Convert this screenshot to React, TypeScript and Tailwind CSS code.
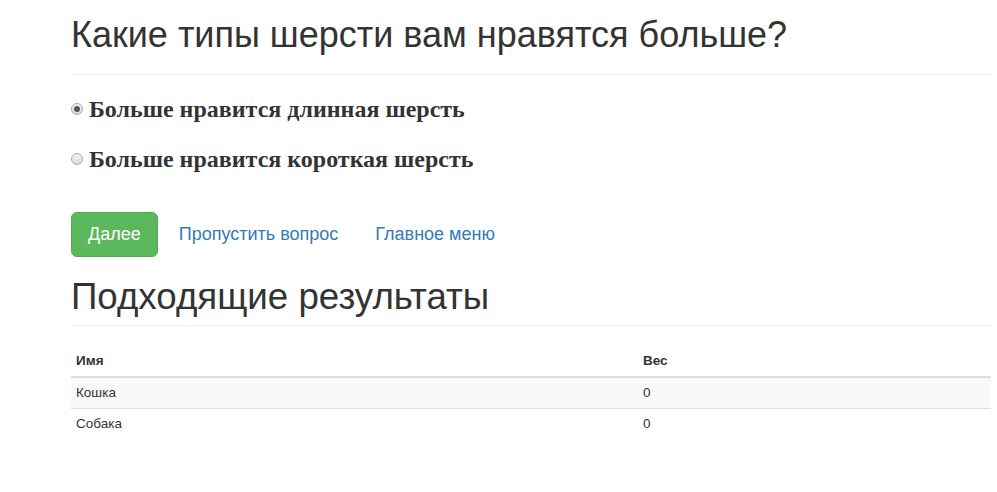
import React from "react";

const answers = [
  { id: 1, title: "Больше нравится длинная шерсть", checked: true },
  { id: 2, title: "Больше нравится короткая шерсть", checked: false },
];

const results = [
  { name: "Кошка", weight: 0 },
  { name: "Собака", weight: 0 },
];

const Radio = ({ checked }: { checked: boolean }) => (
  <span className="w-[12px] h-[12px] rounded-full border border-[#a8a8a8] bg-gradient-to-b from-[#f4f4f4] to-[#d9d9d9] flex items-center justify-center shrink-0">
    {checked && <span className="w-[6px] h-[6px] rounded-full bg-[#555]" />}
  </span>
);

export default function App() {
  return (
    <div
      className="bg-white text-[#333] pl-[71px] pr-[6px] pt-[15px] min-h-[492px]"
      style={{ fontFamily: '"Liberation Sans", Arial, sans-serif' }}
    >
      <div className="border-b border-[#eee] pb-[19px]">
        <h1 className="text-[36px] leading-[39.6px] font-normal">
          Какие типы шерсти вам нравятся больше?
        </h1>
      </div>

      <div className="pt-[20px] flex flex-col gap-[22px]">
        {answers.map((a) => (
          <label key={a.id} className="flex items-center h-[28px] cursor-pointer">
            <Radio checked={a.checked} />
            <span
              className="ml-[6px] text-[24px] font-bold"
              style={{ fontFamily: '"Liberation Serif", "Times New Roman", serif' }}
            >
              {a.title}
            </span>
          </label>
        ))}
      </div>

      <div className="mt-[39px] flex items-center gap-[5px]">
        <button className="h-[45px] px-[16px] rounded-[6px] bg-[#5cb85c] border border-[#4cae4c] text-white text-[18px]">
          Далее
        </button>
        <a href="#" className="px-[16px] text-[18px] text-[#337ab7]">
          Пропустить вопрос
        </a>
        <a href="#" className="px-[16px] text-[18px] text-[#337ab7]">
          Главное меню
        </a>
      </div>

      <div className="mt-[20px] border-b border-[#eee] pb-[9px]">
        <h2 className="text-[36.7px] leading-[39.6px] font-normal">Подходящие результаты</h2>
      </div>

      <table className="mt-[20px] w-full text-[13.5px] leading-[20px] border-collapse">
        <thead>
          <tr className="border-b-2 border-[#ddd]">
            <th className="text-left font-bold px-[5px] py-[5px] w-[567px]">Имя</th>
            <th className="text-left font-bold px-[5px] py-[5px]">Вес</th>
          </tr>
        </thead>
        <tbody>
          {results.map((r, i) => (
            <tr
              key={r.name}
              className={i % 2 === 0 ? "bg-[#f9f9f9]" : "border-t border-[#ddd]"}
            >
              <td className="px-[5px] py-[5px]">{r.name}</td>
              <td className="px-[5px] py-[5px]">{r.weight}</td>
            </tr>
          ))}
        </tbody>
      </table>
    </div>
  );
}
